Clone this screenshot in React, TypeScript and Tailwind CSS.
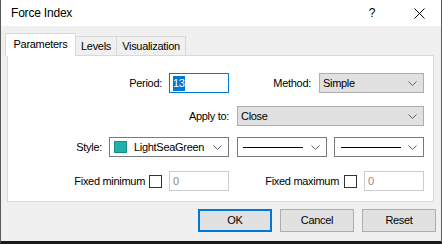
import React from "react";

const Chevron = () => (
  <svg width="9" height="5" viewBox="0 0 9 5" className="shrink-0">
    <polyline points="0.5,0.5 4.5,4.5 8.5,0.5" fill="none" stroke="#606060" strokeWidth="1" />
  </svg>
);

const GraySelect = ({ w, text }: { w: string; text: string }) => (
  <div className={`${w} h-[20px] border border-[#adadad] bg-[#e1e1e1] flex items-center justify-between pl-[3px] pr-[6px]`}>
    <span>{text}</span>
    <Chevron />
  </div>
);

const Checkbox = () => <div className="w-[13px] h-[13px] border border-[#333333] bg-white shrink-0" />;

const DisabledInput = () => (
  <div className="w-[60px] h-[20px] border border-[#cccccc] bg-white flex items-center pl-[3px] text-[#8a8a8a]">0</div>
);

const Btn = ({ text, primary }: { text: string; primary?: boolean }) => (
  <div
    className={`w-[74px] h-[23px] flex items-center justify-center bg-[#e1e1e1] ${
      primary ? "border-2 border-[#0078d7]" : "border border-[#adadad]"
    }`}
  >
    {text}
  </div>
);

export default function App() {
  return (
    <div
      className="w-[442px] h-[244px] flex flex-col bg-[#f0f0f0] border-l border-r border-[#5a5a5a] border-b-[3px] border-b-[#1a1a1a] text-black text-[11px] tracking-[-0.3px] leading-none overflow-hidden"
      style={{ fontFamily: '"Liberation Sans", Arial, sans-serif' }}
    >
      {/* Title bar */}
      <div className="h-[26px] bg-white flex items-center shrink-0">
        <span className="ml-[10px] text-[12px] tracking-[-0.2px]">Force Index</span>
        <span className="ml-auto text-[12px] mr-[39px]">?</span>
        <svg width="11" height="11" viewBox="0 0 11 11" className="mr-[16px]">
          <path d="M0.5 0.5 L10.5 10.5 M10.5 0.5 L0.5 10.5" stroke="#000" strokeWidth="1" />
        </svg>
      </div>

      {/* Tabs */}
      <div className="mt-[7px] ml-[4px] h-[22px] flex items-end shrink-0 relative z-10">
        <div className="w-[71px] h-[23px] -mb-[1px] bg-white border border-b-0 border-[#d9d9d9] flex items-center justify-center pb-[2px]">
          Parameters
        </div>
        <div className="w-[41px] h-[19px] border border-l-0 border-b-0 border-[#d9d9d9] bg-[#f0f0f0] flex items-center justify-center">
          Levels
        </div>
        <div className="w-[69px] h-[19px] border border-l-0 border-b-0 border-[#d9d9d9] bg-[#f0f0f0] flex items-center justify-center">
          Visualization
        </div>
      </div>

      {/* Panel */}
      <div className="ml-[6px] w-[427px] h-[147px] bg-white border border-[#d9d9d9] flex flex-col pt-[17px] shrink-0">
        {/* Row 1 */}
        <div className="flex items-center h-[20px]">
          <span className="w-[154px] text-right">Period:</span>
          <div className="ml-[7px] w-[60px] h-[20px] border border-[#0078d7] bg-white flex items-center pl-[3px]">
            <span className="bg-[#0078d7] text-white py-[2px]">13</span>
          </div>
          <span className="w-[82px] text-right">Method:</span>
          <div className="ml-[8px]">
            <GraySelect w="w-[105px]" text="Simple" />
          </div>
        </div>
        {/* Row 2 */}
        <div className="flex items-center h-[20px] mt-[13px]">
          <span className="w-[221px] text-right">Apply to:</span>
          <div className="ml-[8px]">
            <GraySelect w="w-[187px]" text="Close" />
          </div>
        </div>
        {/* Row 3 */}
        <div className="flex items-center h-[20px] mt-[11px]">
          <span className="w-[94px] text-right">Style:</span>
          <div className="ml-[7px] w-[120px] h-[20px] border border-[#7a7a7a] bg-white flex items-center pl-[4px] pr-[6px]">
            <div className="w-[13px] h-[12px] bg-[#20b2aa] border border-[#1a8c86]" />
            <span className="ml-[7px]">LightSeaGreen</span>
            <span className="ml-auto">
              <Chevron />
            </span>
          </div>
          <div className="ml-[8px] w-[90px] h-[20px] border border-[#7a7a7a] bg-white flex items-center pl-[5px] pr-[6px]">
            <div className="w-[60px] h-[1px] bg-black" />
            <span className="ml-auto">
              <Chevron />
            </span>
          </div>
          <div className="ml-[7px] w-[90px] h-[20px] border border-[#7a7a7a] bg-white flex items-center pl-[6px] pr-[6px]">
            <div className="w-[60px] h-[1px] bg-black" />
            <span className="ml-auto">
              <Chevron />
            </span>
          </div>
        </div>
        {/* Row 4 */}
        <div className="flex items-center h-[20px] mt-[14px]">
          <span className="w-[137px] text-right">Fixed minimum</span>
          <div className="ml-[4px]">
            <Checkbox />
          </div>
          <div className="ml-[7px]">
            <DisabledInput />
          </div>
          <span className="w-[110px] text-right">Fixed maximum</span>
          <div className="ml-[5px]">
            <Checkbox />
          </div>
          <div className="ml-[7px]">
            <DisabledInput />
          </div>
        </div>
      </div>

      {/* Buttons */}
      <div className="mt-[7px] flex justify-end gap-[8px] pr-[5px]">
        <Btn text="OK" primary />
        <Btn text="Cancel" />
        <Btn text="Reset" />
      </div>
    </div>
  );
}
